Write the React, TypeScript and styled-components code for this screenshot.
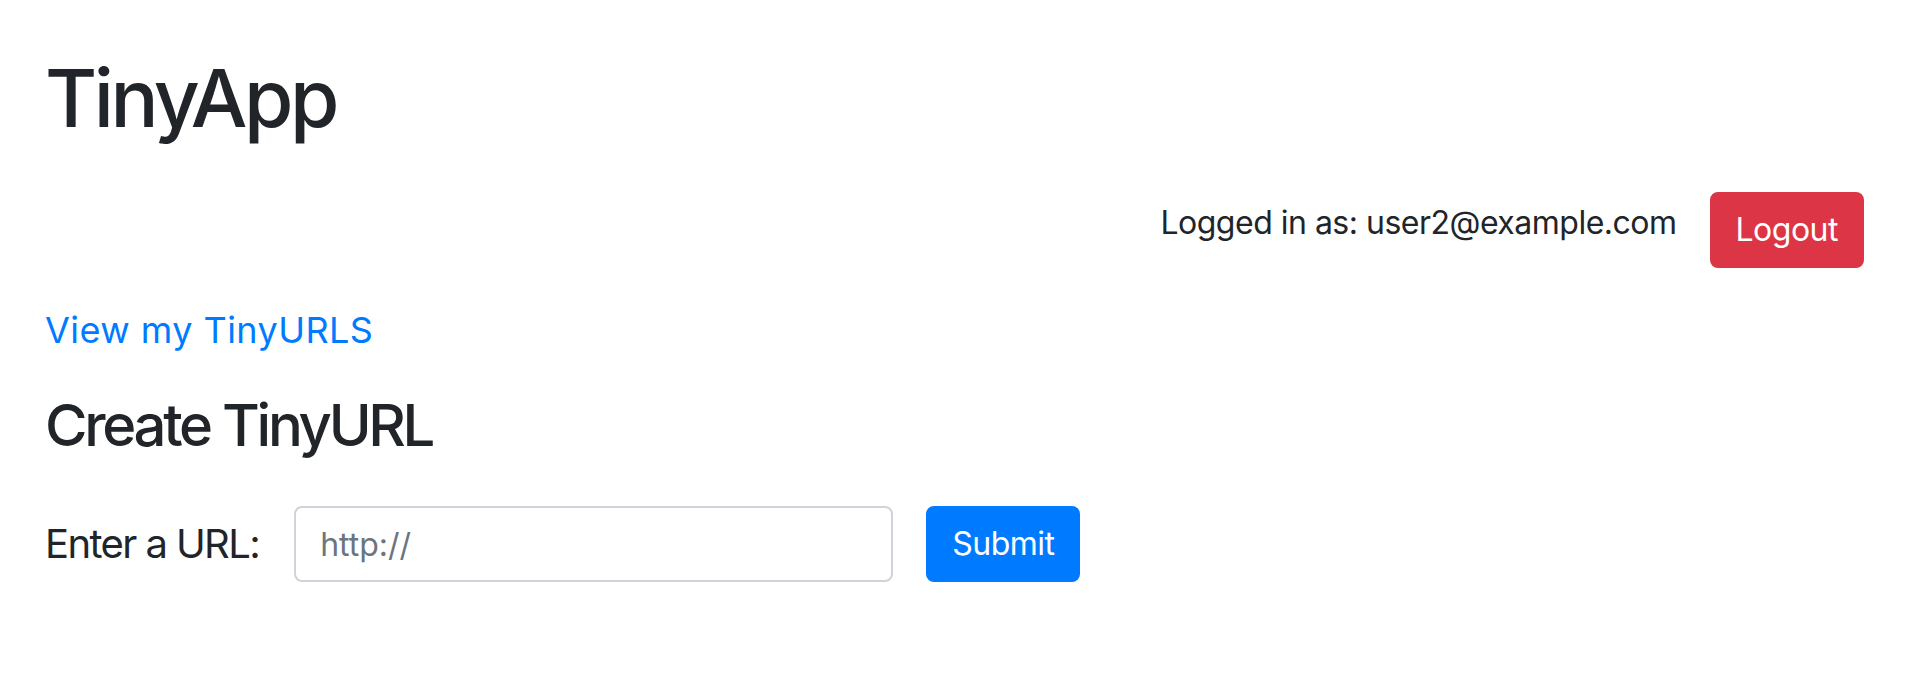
import React from 'react';
import styled, { createGlobalStyle } from 'styled-components';

const GlobalStyle = createGlobalStyle`
  html, body {
    margin: 0;
    padding: 0;
    background: #fff;
  }
  body {
    font-family: Inter, "Noto Sans", "Liberation Sans", sans-serif;
    color: #212529;
    font-size: 32px;
    line-height: 48px;
  }
`;

const Page = styled.div`
  display: flex;
  flex-direction: column;
  padding: 0 54px 0 45px;
`;

const Title = styled.h1`
  margin: 50px 0 0;
  font-size: 80px;
  line-height: 96px;
  font-weight: 500;
  letter-spacing: -3.5px;
`;

const UserBar = styled.div`
  display: flex;
  justify-content: flex-end;
  align-items: flex-start;
  gap: 33px;
  margin-top: 46px;
`;

const UserLabel = styled.span`
  margin-top: 7px;
  letter-spacing: -0.5px;
`;

const Button = styled.button<{ $variant: 'danger' | 'primary' }>`
  font-family: inherit;
  font-size: 32px;
  line-height: 48px;
  letter-spacing: -0.5px;
  padding: 12px 24px;
  border: 2px solid ${p => (p.$variant === 'danger' ? '#dc3545' : '#007bff')};
  background: ${p => (p.$variant === 'danger' ? '#dc3545' : '#007bff')};
  color: #fff;
  border-radius: 8px;
  cursor: pointer;
`;

const UrlsLink = styled.a`
  margin-top: 35px;
  font-size: 36px;
  line-height: 54px;
  letter-spacing: 0.45px;
  color: #007bff;
  text-decoration: none;
  align-self: flex-start;
`;

const SubTitle = styled.h2`
  margin: 33px 0 0;
  font-size: 58px;
  line-height: 70px;
  font-weight: 500;
  letter-spacing: -3.3px;
`;

const Form = styled.form`
  display: flex;
  align-items: center;
  margin-top: 46px;
`;

const Label = styled.label`
  font-size: 40px;
  line-height: 60px;
  letter-spacing: -1.6px;
  margin-right: 35px;
`;

const Input = styled.input`
  box-sizing: border-box;
  width: 599px;
  height: 76px;
  padding: 0 24px;
  font-family: inherit;
  font-size: 32px;
  color: #495057;
  border: 2px solid #ced4da;
  border-radius: 8px;
  margin-right: 33px;
  outline: none;
  &::placeholder {
    color: #6c757d;
  }
`;

export default function App() {
  return (
    <>
      <GlobalStyle />
      <Page>
        <Title>TinyApp</Title>
        <UserBar>
          <UserLabel>Logged in as: user2@example.com</UserLabel>
          <Button type="button" $variant="danger">Logout</Button>
        </UserBar>
        <UrlsLink href="#">View my TinyURLS</UrlsLink>
        <SubTitle>Create TinyURL</SubTitle>
        <Form onSubmit={e => e.preventDefault()}>
          <Label htmlFor="longURL">Enter a URL:</Label>
          <Input id="longURL" type="text" placeholder="http://" />
          <Button type="submit" $variant="primary">Submit</Button>
        </Form>
      </Page>
    </>
  );
}
